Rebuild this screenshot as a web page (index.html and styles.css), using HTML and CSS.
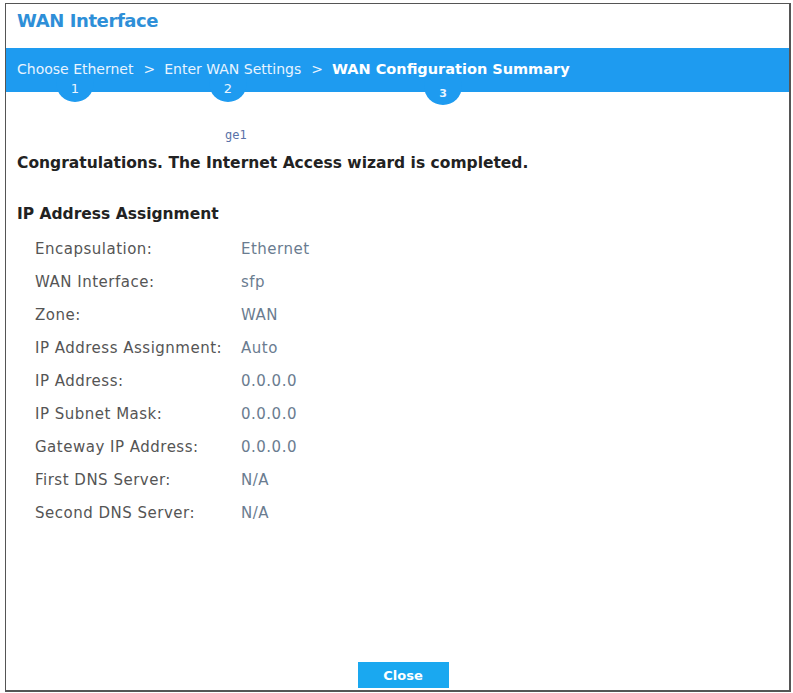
FILE: index.html
```html
<!DOCTYPE html>
<html lang="en">
<head>
    <meta charset="utf-8">
    <title>WAN Interface</title>
    <link rel="stylesheet" href="styles.css">
</head>
<body>
    <div class="dialog">
        <h1 class="dialog-title">WAN Interface</h1>

        <div class="steps">
            <span class="step">Choose Ethernet</span>
            <span class="sep">&gt;</span>
            <span class="step">Enter WAN Settings</span>
            <span class="sep">&gt;</span>
            <span class="step current">WAN Configuration Summary</span>

            <span class="tab tab-1">1</span>
            <span class="tab tab-2">2</span>
            <span class="tab tab-3">3</span>
        </div>

        <div class="content">
            <div class="iface">ge1</div>
            <p class="done">Congratulations. The Internet Access wizard is completed.</p>

            <h2 class="section">IP Address Assignment</h2>
            <div class="summary">
                <span class="label">Encapsulation:</span><span class="value">Ethernet</span>
                <span class="label">WAN Interface:</span><span class="value">sfp</span>
                <span class="label">Zone:</span><span class="value">WAN</span>
                <span class="label">IP Address Assignment:</span><span class="value">Auto</span>
                <span class="label">IP Address:</span><span class="value">0.0.0.0</span>
                <span class="label">IP Subnet Mask:</span><span class="value">0.0.0.0</span>
                <span class="label">Gateway IP Address:</span><span class="value">0.0.0.0</span>
                <span class="label">First DNS Server:</span><span class="value">N/A</span>
                <span class="label">Second DNS Server:</span><span class="value">N/A</span>
            </div>
        </div>

        <div class="footer">
            <button class="close-btn">Close</button>
        </div>
    </div>
</body>
</html>
```

FILE: styles.css
```css
body {
    background-color: #ffffff;
    margin: 0;
    font-family: "DejaVu Sans", sans-serif;
}

.dialog {
    margin: 3px 2px 0 5px;
    height: 689px;
    border: 1px solid #555;
    border-right-width: 2px;
    border-bottom-width: 2px;
    display: flex;
    flex-direction: column;
    box-sizing: border-box;
}

.dialog-title {
    margin: 0;
    padding: 6px 0 0 11px;
    height: 38px;
    box-sizing: border-box;
    font-size: 18px;
    font-weight: bold;
    color: #2e8fd8;
    letter-spacing: -0.4px;
}

.steps {
    position: relative;
    height: 42px;
    margin-top: 6px;
    background: #1e9bf0;
    display: flex;
    align-items: center;
    padding: 0 0 2px 11px;
    font-size: 14px;
    color: #e8f4ff;
}

.step,
.sep {
    position: relative;
    z-index: 1;
}

.sep {
    margin: 0 9px 0 10px;
}

.step.current {
    font-weight: bold;
    font-size: 14.5px;
    color: #ffffff;
}

.tab {
    position: absolute;
    top: 16px;
    width: 38px;
    height: 38px;
    margin-left: -19px;
    border-radius: 50%;
    background: #1e9bf0;
    color: #e8f4ff;
    font-size: 13px;
    text-align: center;
    line-height: 50px;
}

.tab-1 { left: 69px; }
.tab-2 { left: 222px; }
.tab-3 { left: 437px; top: 19px; font-weight: bold; font-size: 11px; line-height: 54px; }

.content {
    flex: 1;
    padding: 0 0 0 11px;
}

.iface {
    margin: 36px 0 0 208px;
    font-family: "DejaVu Sans Mono", monospace;
    font-size: 12px;
    color: #5a72a8;
}

.done {
    margin: 12px 0 0;
    font-size: 15.5px;
    font-weight: bold;
    color: #222;
}

.section {
    margin: 33px 0 0;
    font-size: 15.5px;
    font-weight: bold;
    color: #222;
}

.summary {
    display: grid;
    grid-template-columns: 206px auto;
    row-gap: 14px;
    margin: 17px 0 0 18px;
    font-size: 15px;
    line-height: 19px;
    letter-spacing: 0.5px;
}

.label {
    color: #555;
}

.value {
    color: #6a7c90;
}

.footer {
    display: flex;
    justify-content: center;
    padding-bottom: 2px;
}

.close-btn {
    width: 91px;
    height: 26px;
    margin-left: 11px;
    border: none;
    background: #1aa8f0;
    color: #ffffff;
    font-family: "DejaVu Sans", sans-serif;
    font-size: 13px;
    font-weight: bold;
    padding: 0;
}
```
